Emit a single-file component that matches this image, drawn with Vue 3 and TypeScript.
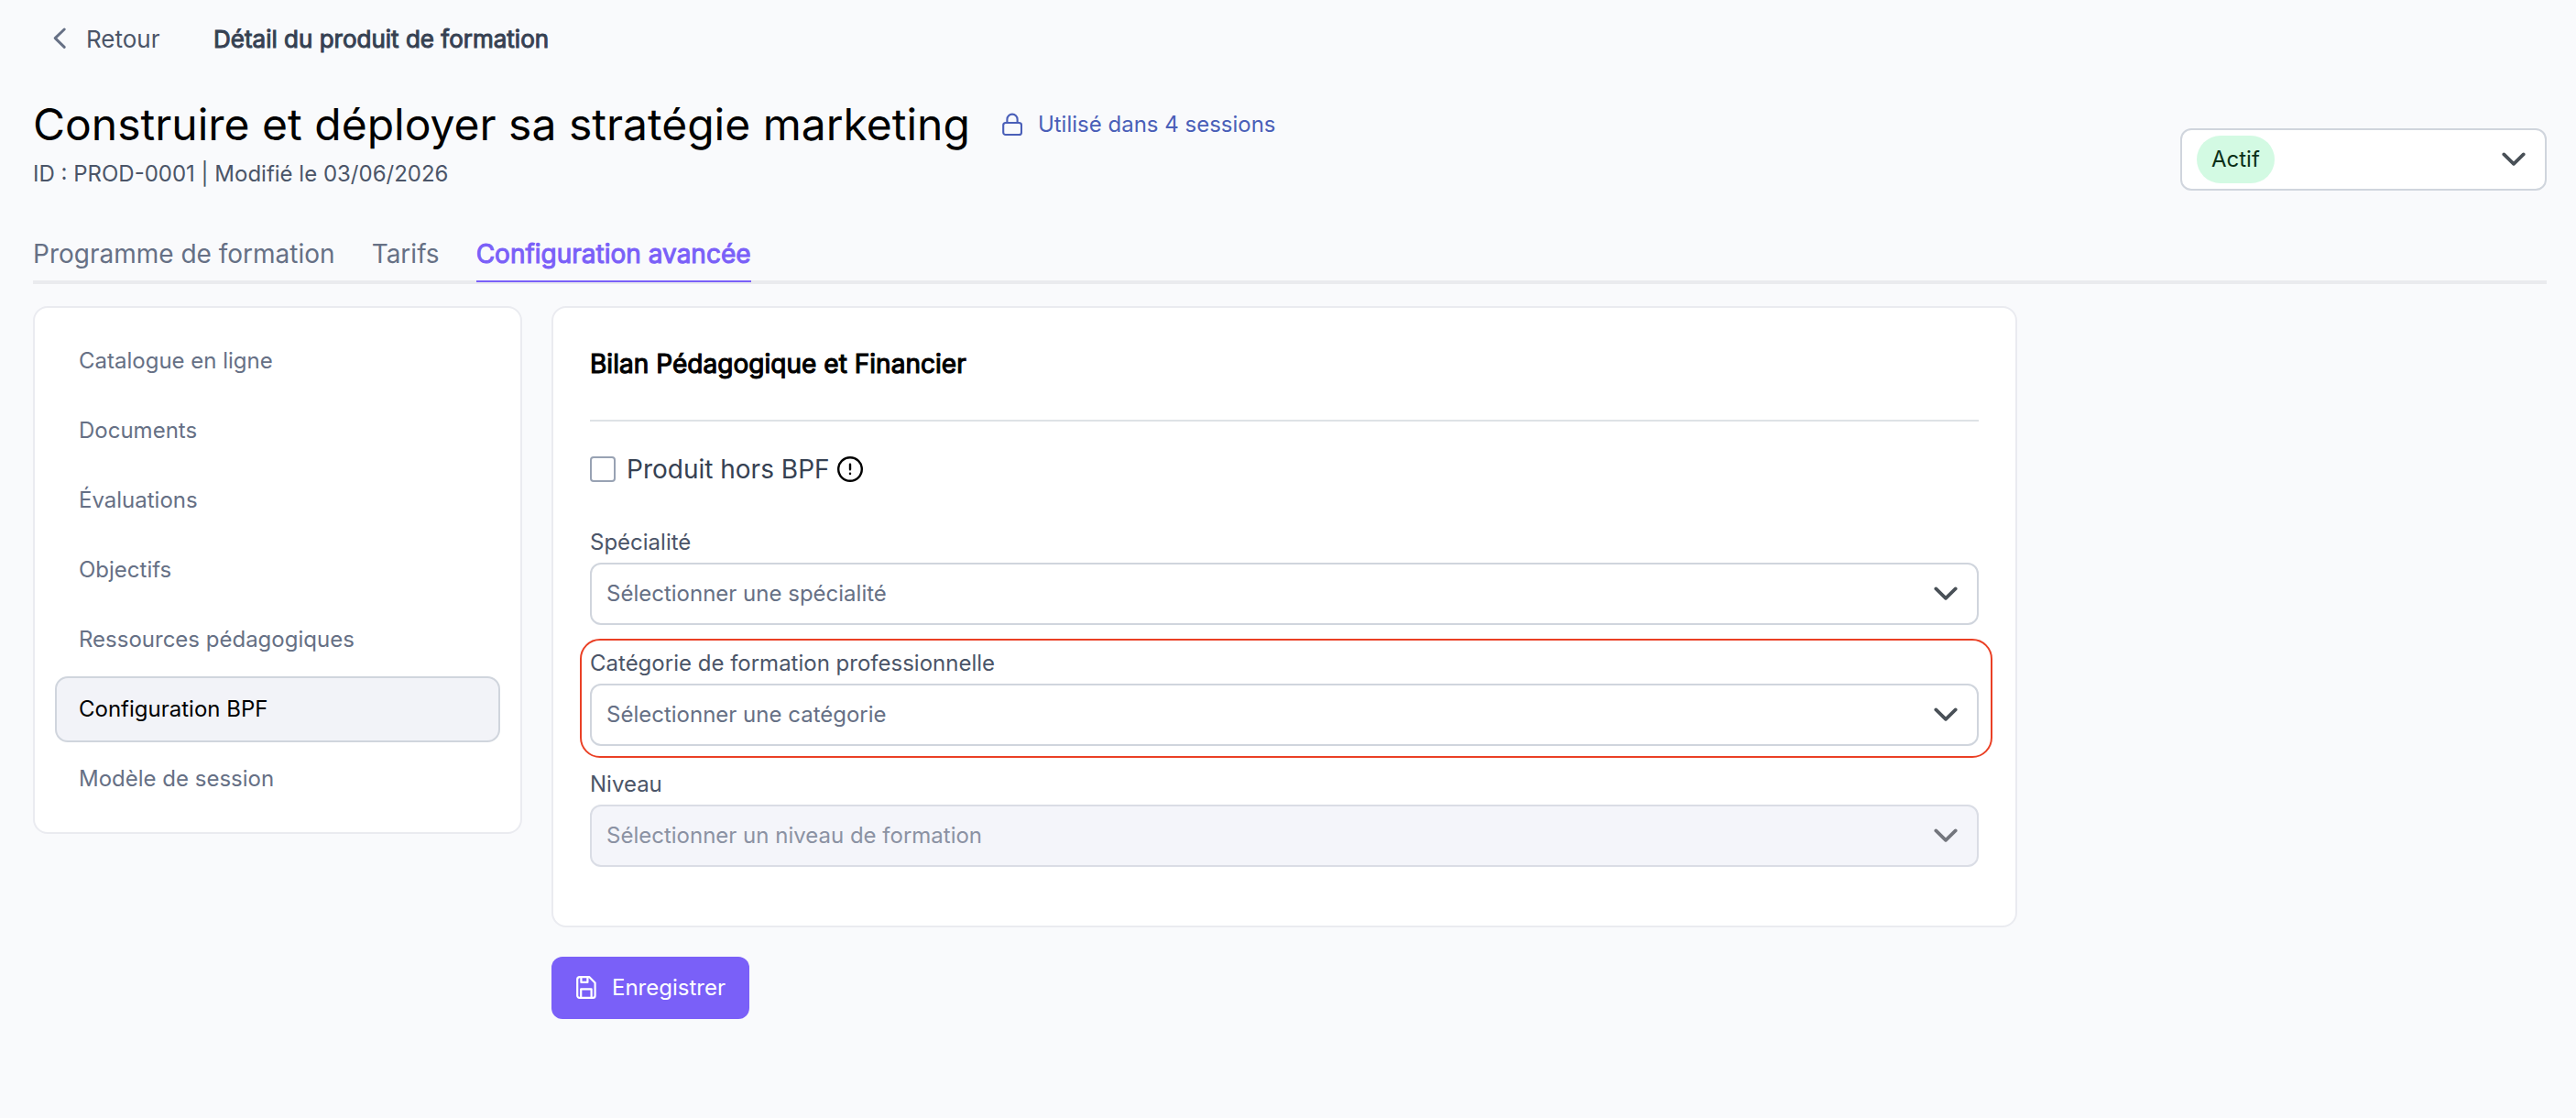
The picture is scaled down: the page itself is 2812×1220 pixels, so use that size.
<script setup lang="ts">
import { ref } from 'vue'

interface SelectField {
  label: string
  placeholder: string
  disabled?: boolean
  highlighted?: boolean
}

const tabs: string[] = ['Programme de formation', 'Tarifs', 'Configuration avancée']
const activeTab = ref(2)

const sections: string[] = [
  'Catalogue en ligne',
  'Documents',
  'Évaluations',
  'Objectifs',
  'Ressources pédagogiques',
  'Configuration BPF',
  'Modèle de session',
]
const activeSection = ref(5)

const fields: SelectField[] = [
  { label: 'Spécialité', placeholder: 'Sélectionner une spécialité' },
  {
    label: 'Catégorie de formation professionnelle',
    placeholder: 'Sélectionner une catégorie',
    highlighted: true,
  },
  { label: 'Niveau', placeholder: 'Sélectionner un niveau de formation', disabled: true },
]

const outsideBpf = ref(false)
</script>

<template>
  <div class="page">
    <nav class="topbar">
      <a class="back">
        <svg class="back-icon" viewBox="0 0 14 24" fill="none">
          <path d="M12.2 2 2.2 11.6l10 9.8" />
        </svg>
        <span>Retour</span>
      </a>
      <span class="crumb">Détail du produit de formation</span>
    </nav>

    <header class="header">
      <div class="heading">
        <div class="title-row">
          <h1>Construire et déployer sa stratégie marketing</h1>
          <span class="usage">
            <svg class="lock" viewBox="0 0 22 26" fill="none">
              <rect x="1.2" y="11" width="19.8" height="13" rx="2.6" />
              <path d="M5.4 11V7.2a5.6 5.6 0 0 1 11.2 0V11" />
            </svg>
            <span>Utilisé dans 4 sessions</span>
          </span>
        </div>
        <p class="meta">ID : PROD-0001 | Modifié le 03/06/2026</p>
      </div>
      <div class="select status">
        <span class="badge">Actif</span>
        <svg class="chevron" viewBox="0 0 26 16" fill="none"><path d="M2.3 2.4 13 12.9 23.7 2.4" /></svg>
      </div>
    </header>

    <div class="tabs">
      <button
        v-for="(tab, i) in tabs"
        :key="tab"
        class="tab"
        :class="{ active: i === activeTab }"
        @click="activeTab = i"
      >{{ tab }}</button>
    </div>

    <div class="content">
      <aside class="card side">
        <a
          v-for="(section, i) in sections"
          :key="section"
          class="side-item"
          :class="{ active: i === activeSection }"
          @click="activeSection = i"
        >{{ section }}</a>
      </aside>

      <main class="main">
        <section class="card panel">
          <h2>Bilan Pédagogique et Financier</h2>
          <label class="check">
            <input v-model="outsideBpf" type="checkbox" class="box" />
            <span class="check-label">Produit hors BPF</span>
            <svg class="info" viewBox="0 0 28 28" fill="none">
              <circle cx="14" cy="14" r="12.8" />
              <path d="M14 8.6v5.6M14 18.6v.4" />
            </svg>
          </label>
          <div
            v-for="field in fields"
            :key="field.label"
            class="field"
            :class="{ highlighted: field.highlighted }"
          >
            <span class="field-label">{{ field.label }}</span>
            <div class="select" :class="{ disabled: field.disabled }">
              <span class="placeholder">{{ field.placeholder }}</span>
              <svg class="chevron" viewBox="0 0 26 16" fill="none"><path d="M2.3 2.4 13 12.9 23.7 2.4" /></svg>
            </div>
          </div>
        </section>
        <button class="save">
          <svg class="disk" viewBox="0 0 22 26" fill="none">
            <path d="M3.8 1.2h10.6l6.2 6.4v13.9a2.4 2.4 0 0 1-2.4 2.4H3.6a2.4 2.4 0 0 1-2.4-2.4V3.8a2.6 2.6 0 0 1 2.6-2.6Z" />
            <path d="M5.4 1.4v5.5h7V1.4M5.2 23.7v-9.4h11.4v9.4" />
          </svg>
          <span>Enregistrer</span>
        </button>
      </main>
    </div>
  </div>
</template>

<style>
body {
  margin: 0;
  background: #f9fafc;
}
</style>

<style scoped>
.page {
  box-sizing: border-box;
  width: 2812px;
  height: 1220px;
  padding: 16px 32px 0 36px;
  background: #f9fafc;
  color: #000;
  font-family: Inter, "Liberation Sans", sans-serif;
  font-size: 24px;
  line-height: 28px;
}

.page *,
.page *::before,
.page *::after {
  box-sizing: border-box;
}

.topbar {
  display: flex;
  align-items: center;
  height: 52px;
  padding-left: 22px;
  font-size: 26px;
  line-height: 30px;
}

.topbar span {
  padding-top: 2px;
}

.back {
  display: flex;
  align-items: center;
  gap: 22px;
  width: 175px;
  color: #4b5568;
}

.back-icon {
  width: 14px;
  height: 24px;
  stroke: #667085;
  stroke-width: 2.9;
  stroke-linecap: round;
  stroke-linejoin: round;
}

.crumb {
  color: #364152;
  -webkit-text-stroke: 1px currentColor;
}

.header {
  display: flex;
  justify-content: space-between;
  height: 180px;
}

.heading {
  padding-top: 38px;
}

.title-row {
  display: flex;
  align-items: center;
  height: 60px;
}

h1 {
  margin: 0;
  font-size: 48px;
  font-weight: 400;
  line-height: 60px;
  white-space: nowrap;
}

.usage {
  display: flex;
  align-items: center;
  gap: 17px;
  margin-left: 35px;
  color: #4a5fb8;
  white-space: nowrap;
}

.lock {
  width: 22px;
  height: 26px;
  stroke: currentColor;
  stroke-width: 2.1;
}

.meta {
  margin: 10px 0 0;
  color: #4b5568;
}

.select {
  display: flex;
  align-items: center;
  justify-content: space-between;
  height: 68px;
  padding: 0 21px 0 16px;
  border: 2px solid #d0d5dd;
  border-radius: 12px;
  background: #fff;
}

.select.disabled {
  border-color: #dadde5;
  background: #f4f5fa;
}

.placeholder {
  color: #667085;
}

.disabled .placeholder {
  color: #8b92a3;
}

.chevron {
  width: 26px;
  height: 16px;
  stroke: #495057;
  stroke-width: 3.7;
  stroke-linecap: round;
  stroke-linejoin: round;
}

.disabled .chevron {
  stroke: #73767d;
}

.status {
  width: 400px;
  margin-top: 72px;
}

.badge {
  height: 52px;
  padding: 0 16px;
  border-radius: 26px;
  background: #d3fae3;
  color: #0b3018;
  line-height: 52px;
}

.tabs {
  display: flex;
  gap: 40px;
  height: 62px;
  background: linear-gradient(#eaebee, #eaebee) bottom / 100% 4px no-repeat;
}

.tab {
  height: 60px;
  padding: 11px 0;
  border: 0;
  border-bottom: 2px solid transparent;
  background: none;
  color: #667085;
  font: inherit;
  font-size: 28px;
  line-height: 36px;
  white-space: nowrap;
}

.tab.active {
  border-bottom-color: #7a60f8;
  color: #7a60f8;
  -webkit-text-stroke: 1px currentColor;
}

.content {
  display: flex;
  align-items: flex-start;
  gap: 32px;
  margin-top: 24px;
}

.card {
  border: 2px solid #eaebf0;
  border-radius: 16px;
  background: #fff;
}

.side {
  display: flex;
  flex-direction: column;
  gap: 4px;
  width: 534px;
  padding: 22px;
}

.side-item {
  height: 72px;
  padding: 0 24px;
  border: 2px solid transparent;
  border-radius: 14px;
  color: #667085;
  line-height: 68px;
}

.side-item.active {
  border-color: #d0d5dd;
  background: #f2f3f8;
  color: #000;
}

.panel {
  width: 1600px;
  height: 678px;
  padding: 40px 40px 0;
}

h2 {
  height: 84px;
  margin: 0;
  border-bottom: 2px solid #dee2e6;
  font-size: 28px;
  font-weight: 400;
  line-height: 42px;
  letter-spacing: 0.03px;
  -webkit-text-stroke: 1.1px currentColor;
}

.check {
  display: flex;
  align-items: center;
  height: 28px;
  margin: 38px 0 50px;
  color: #364152;
  font-size: 28px;
}

.box {
  appearance: none;
  width: 28px;
  height: 28px;
  margin: 0 12px 0 0;
  border: 2px solid #98a2b3;
  border-radius: 4px;
}

.info {
  width: 28px;
  height: 28px;
  margin-left: 8px;
  stroke: #000;
  stroke-width: 2.4;
  stroke-linecap: round;
}

.field {
  position: relative;
  display: flex;
  flex-direction: column;
  height: 106px;
  margin-bottom: 26px;
}

.field-label {
  height: 38px;
  color: #4b5568;
  line-height: 32px;
}

.highlighted::after {
  content: "";
  position: absolute;
  inset: -11px -15px -13px -11px;
  border: 2px solid #ea4025;
  border-radius: 22px;
}

.save {
  display: flex;
  align-items: center;
  gap: 17px;
  width: 216px;
  height: 68px;
  margin-top: 32px;
  padding: 0 0 0 27px;
  border: 0;
  border-radius: 12px;
  background: #7a60f8;
  color: #fff;
  font: inherit;
}

.disk {
  width: 22px;
  height: 26px;
  stroke: currentColor;
  stroke-width: 2.2;
  stroke-linejoin: round;
}
</style>
